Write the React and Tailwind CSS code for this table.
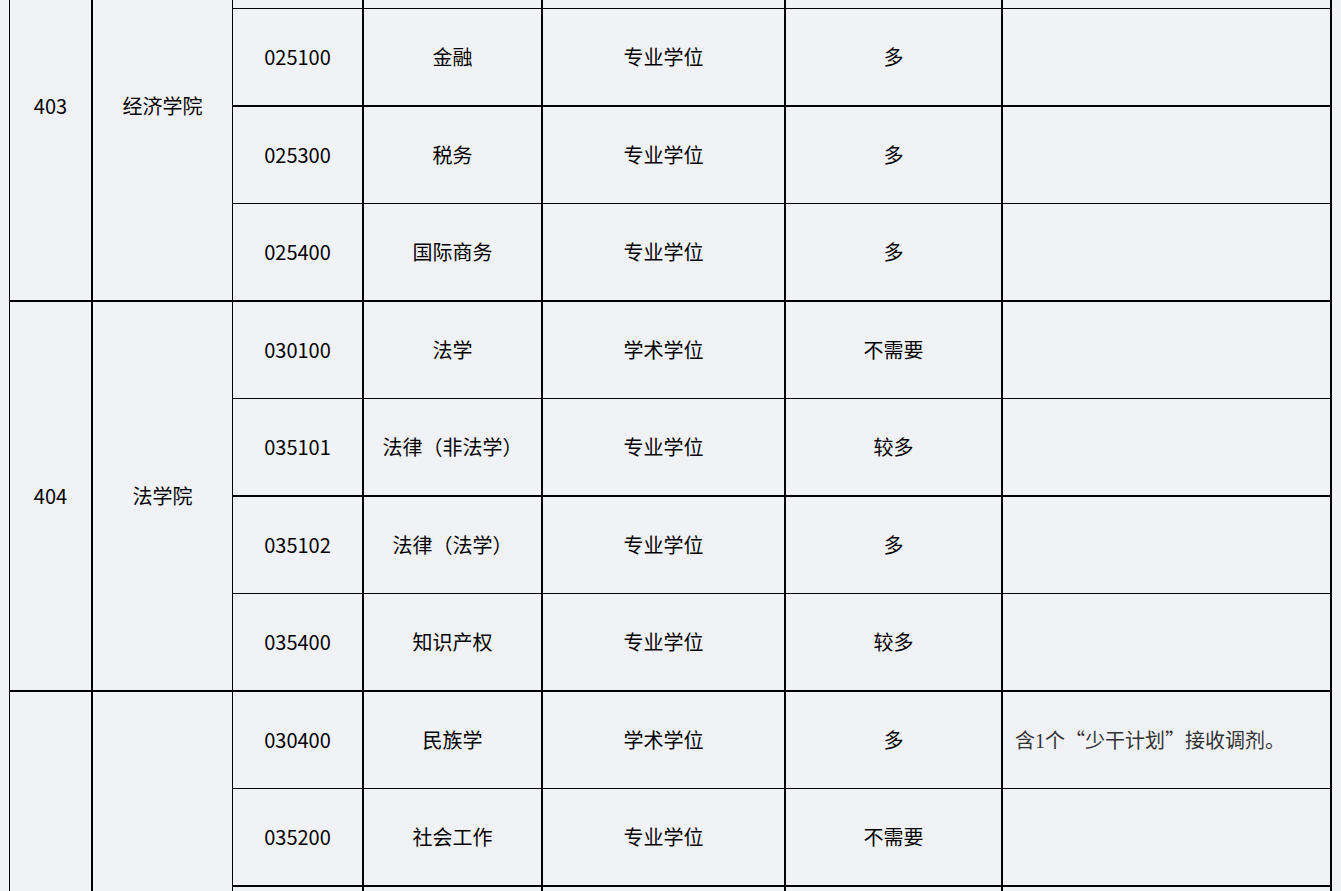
import React from 'react';

// 院系与专业数据：每个院系占多行，院系格跨行
const groups = [
  {
    code: '403',
    name: '经济学院',
    span: 'row-span-4',
    rows: [
      { major: '025200', title: '应用统计', type: '专业学位', need: '多', note: null },
      { major: '025100', title: '金融', type: '专业学位', need: '多', note: null },
      { major: '025300', title: '税务', type: '专业学位', need: '多', note: null },
      { major: '025400', title: '国际商务', type: '专业学位', need: '多', note: null },
    ],
  },
  {
    code: '404',
    name: '法学院',
    span: 'row-span-4',
    rows: [
      { major: '030100', title: '法学', type: '学术学位', need: '不需要', note: null },
      { major: '035101', title: '法律（非法学）', type: '专业学位', need: '较多', note: null },
      { major: '035102', title: '法律（法学）', type: '专业学位', need: '多', note: null },
      { major: '035400', title: '知识产权', type: '专业学位', need: '较多', note: null },
    ],
  },
  {
    code: '405',
    name: '民族与社会学学院',
    span: 'row-span-6',
    rows: [
      { major: '030400', title: '民族学', type: '学术学位', need: '多', note: 'shaogan' },
      { major: '035200', title: '社会工作', type: '专业学位', need: '不需要', note: null },
      { major: '030300', title: '社会学', type: '学术学位', need: '较多', note: null },
      { major: '030401', title: '民族学理论', type: '学术学位', need: '多', note: null },
      { major: '030402', title: '民族经济', type: '学术学位', need: '多', note: null },
      { major: '030403', title: '民族历史', type: '学术学位', need: '多', note: null },
    ],
  },
];

const cellBase =
  'flex items-center justify-center text-center text-[20px] text-black border-black';

// 备注：宋体风格，数字用衬线字体
const Note = () => (
  <span className="font-['Noto_Sans_CJK_SC',serif] text-[#333]">
    含<span className="font-['Liberation_Serif',serif]">1</span>个“少干计划”接收调剂。
  </span>
);

const App = () => {
  let rowIndex = 0;
  const cells = [];

  groups.forEach((g) => {
    cells.push(
      <div key={`${g.code}-code`} className={`${cellBase} ${g.span} col-start-1 border-r-2 border-b-2`}>
        {g.code}
      </div>
    );
    cells.push(
      <div key={`${g.code}-name`} className={`${cellBase} ${g.span} col-start-2 border-r border-b-2 px-2`}>
        {g.name}
      </div>
    );

    g.rows.forEach((r) => {
      const bottom = rowIndex % 2 === 0 ? 'border-b' : 'border-b-2';
      cells.push(
        <div key={`${r.major}-a`} className={`${cellBase} col-start-3 border-r-2 ${bottom}`}>
          {r.major}
        </div>
      );
      cells.push(
        <div key={`${r.major}-b`} className={`${cellBase} border-r-2 ${bottom}`}>
          {r.title}
        </div>
      );
      cells.push(
        <div key={`${r.major}-c`} className={`${cellBase} border-r-2 ${bottom}`}>
          {r.type}
        </div>
      );
      cells.push(
        <div key={`${r.major}-d`} className={`${cellBase} border-r-2 ${bottom}`}>
          {r.need}
        </div>
      );
      cells.push(
        <div key={`${r.major}-e`} className={`flex items-center pl-3 text-[20px] border-black border-r-2 ${bottom}`}>
          {r.note ? <Note /> : null}
        </div>
      );
      rowIndex += 1;
    });
  });

  return (
    <div className="h-[891px] overflow-hidden bg-[#f1f2f6] pl-[9px] font-['Noto_Sans_CJK_SC','Noto_Sans',sans-serif]">
      <div className="-mt-[88px] w-[1323px] border-l border-black grid grid-cols-[83px_140px_131px_179px_243px_217px_329px] grid-rows-[97px_98px_97px_98px_97px_98px_97px_98px_97px_98px_97px_98px_97px_98px]">
        {cells}
      </div>
    </div>
  );
};

export default App;
